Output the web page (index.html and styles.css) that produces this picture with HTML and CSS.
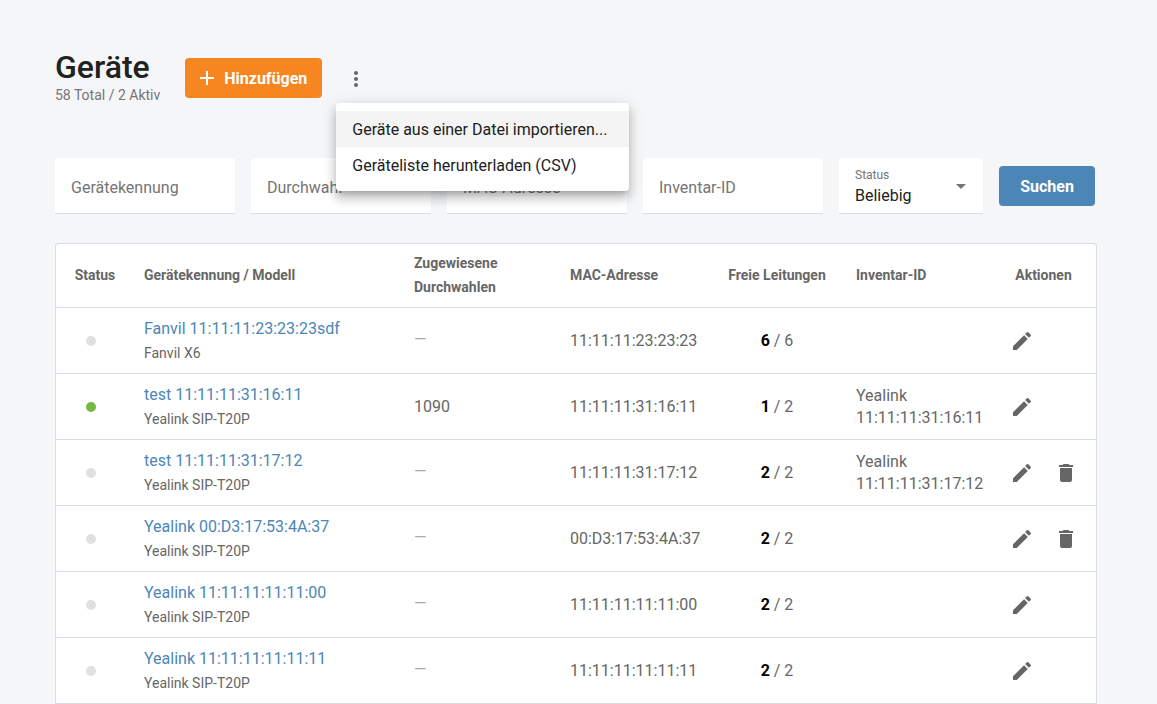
FILE: index.html
```html
<!DOCTYPE html>
<html lang="de">
<head>
<meta charset="utf-8">
<meta name="viewport" content="width=device-width, initial-scale=1">
<title>Geräte</title>
<link rel="stylesheet" href="styles.css">
</head>
<body>
<svg class="sprite" aria-hidden="true">
  <symbol id="icon-edit" viewBox="0 0 24 24"><path d="M3 17.25V21h3.75L17.81 9.94l-3.75-3.75L3 17.25zM20.71 7.04a.996.996 0 0 0 0-1.41l-2.34-2.34a.996.996 0 0 0-1.41 0l-1.83 1.83 3.75 3.75 1.83-1.83z"/></symbol>
  <symbol id="icon-delete" viewBox="0 0 24 24"><path d="M6 19c0 1.1.9 2 2 2h8c1.100 0 2-.9 2-2V7H6v12zM19 4h-3.500l-1-1h-5l-1 1H5v2h14V4z"/></symbol>
</svg>
<main class="page">
  <header class="header">
    <div class="heading">
      <h1 class="title">Geräte</h1>
      <p class="subtitle">58 Total / 2 Aktiv</p>
    </div>
    <button class="button button-add" type="button">
      <svg class="plus" viewBox="0 0 14 14" aria-hidden="true"><path d="M6 0h2v6h6v2H8v6H6V8H0V6h6z"/></svg>
      <span>Hinzufügen</span>
    </button>
    <div class="more">
      <button class="icon-button" type="button" aria-label="Weitere Aktionen" aria-haspopup="menu" aria-expanded="true">
        <svg class="icon" viewBox="0 0 24 24" aria-hidden="true"><path d="M12 8c1.100 0 2-.9 2-2s-.9-2-2-2-2 .9-2 2 .9 2 2 2zm0 2c-1.100 0-2 .9-2 2s.9 2 2 2 2-.9 2-2-.9-2-2-2zm0 6c-1.100 0-2 .9-2 2s.9 2 2 2 2-.9 2-2-.9-2-2-2z"/></svg>
      </button>
      <div class="menu" role="menu">
        <button class="menu-item menu-item-active" type="button" role="menuitem">Geräte aus einer Datei importieren...</button>
        <button class="menu-item" type="button" role="menuitem">Geräteliste herunterladen (CSV)</button>
      </div>
    </div>
  </header>

  <form class="filters">
    <input class="field" type="text" placeholder="Gerätekennung" aria-label="Gerätekennung">
    <input class="field" type="text" placeholder="Durchwahl" aria-label="Durchwahl">
    <input class="field" type="text" placeholder="MAC-Adresse" aria-label="MAC-Adresse">
    <input class="field" type="text" placeholder="Inventar-ID" aria-label="Inventar-ID">
    <div class="select-field">
      <label class="select-label" for="status">Status</label>
      <select class="select" id="status"><option>Beliebig</option></select>
      <svg class="select-arrow" viewBox="0 0 10 5" aria-hidden="true"><path d="M0 0h10L5 5z"/></svg>
    </div>
    <button class="button button-search" type="button">Suchen</button>
  </form>

  <div class="card">
    <table class="devices">
      <colgroup>
        <col class="col-status"><col><col class="col-extension"><col class="col-mac"><col class="col-lines"><col class="col-inventory"><col class="col-actions">
      </colgroup>
      <thead>
        <tr>
          <th class="status-heading">Status</th>
          <th>Gerätekennung / Modell</th>
          <th>Zugewiesene Durchwahlen</th>
          <th>MAC-Adresse</th>
          <th class="lines">Freie Leitungen</th>
          <th>Inventar-ID</th>
          <th class="actions">Aktionen</th>
        </tr>
      </thead>
      <tbody>
        <tr>
          <td class="status"><span class="dot"></span></td>
          <td><a class="device" href="#">Fanvil 11:11:11:23:23:23sdf</a><span class="model">Fanvil X6</span></td>
          <td class="none">—</td>
          <td>11:11:11:23:23:23</td>
          <td class="lines"><b>6</b> / 6</td>
          <td></td>
          <td class="actions"><div class="action-list"><button class="action" type="button" aria-label="Bearbeiten"><svg class="icon"><use href="#icon-edit"/></svg></button></div></td>
        </tr>
        <tr>
          <td class="status"><span class="dot dot-active"></span></td>
          <td><a class="device" href="#">test 11:11:11:31:16:11</a><span class="model">Yealink SIP-T20P</span></td>
          <td>1090</td>
          <td>11:11:11:31:16:11</td>
          <td class="lines"><b>1</b> / 2</td>
          <td>Yealink 11:11:11:31:16:11</td>
          <td class="actions"><div class="action-list"><button class="action" type="button" aria-label="Bearbeiten"><svg class="icon"><use href="#icon-edit"/></svg></button></div></td>
        </tr>
        <tr>
          <td class="status"><span class="dot"></span></td>
          <td><a class="device" href="#">test 11:11:11:31:17:12</a><span class="model">Yealink SIP-T20P</span></td>
          <td class="none">—</td>
          <td>11:11:11:31:17:12</td>
          <td class="lines"><b>2</b> / 2</td>
          <td>Yealink 11:11:11:31:17:12</td>
          <td class="actions"><div class="action-list"><button class="action" type="button" aria-label="Bearbeiten"><svg class="icon"><use href="#icon-edit"/></svg></button><button class="action" type="button" aria-label="Löschen"><svg class="icon"><use href="#icon-delete"/></svg></button></div></td>
        </tr>
        <tr>
          <td class="status"><span class="dot"></span></td>
          <td><a class="device" href="#">Yealink 00:D3:17:53:4A:37</a><span class="model">Yealink SIP-T20P</span></td>
          <td class="none">—</td>
          <td>00:D3:17:53:4A:37</td>
          <td class="lines"><b>2</b> / 2</td>
          <td></td>
          <td class="actions"><div class="action-list"><button class="action" type="button" aria-label="Bearbeiten"><svg class="icon"><use href="#icon-edit"/></svg></button><button class="action" type="button" aria-label="Löschen"><svg class="icon"><use href="#icon-delete"/></svg></button></div></td>
        </tr>
        <tr>
          <td class="status"><span class="dot"></span></td>
          <td><a class="device" href="#">Yealink 11:11:11:11:11:00</a><span class="model">Yealink SIP-T20P</span></td>
          <td class="none">—</td>
          <td>11:11:11:11:11:00</td>
          <td class="lines"><b>2</b> / 2</td>
          <td></td>
          <td class="actions"><div class="action-list"><button class="action" type="button" aria-label="Bearbeiten"><svg class="icon"><use href="#icon-edit"/></svg></button></div></td>
        </tr>
        <tr>
          <td class="status"><span class="dot"></span></td>
          <td><a class="device" href="#">Yealink 11:11:11:11:11:11</a><span class="model">Yealink SIP-T20P</span></td>
          <td class="none">—</td>
          <td>11:11:11:11:11:11</td>
          <td class="lines"><b>2</b> / 2</td>
          <td></td>
          <td class="actions"><div class="action-list"><button class="action" type="button" aria-label="Bearbeiten"><svg class="icon"><use href="#icon-edit"/></svg></button></div></td>
        </tr>
      </tbody>
    </table>
  </div>
</main>
</body>
</html>
```

FILE: styles.css
```css
* {
  box-sizing: border-box;
}

body {
  margin: 0;
  background: #f5f6f8;
  color: #666;
  font-family: Roboto, "Liberation Sans", sans-serif;
  font-size: 16px;
}

button,
input,
select {
  border: 0;
  font: inherit;
}

button {
  cursor: pointer;
}

.sprite {
  display: none;
}

.page {
  padding: 48px 60px 0 55px;
}

.header {
  display: flex;
  align-items: center;
  height: 60px;
}

.heading {
  padding-bottom: 4px;
}

.title {
  margin: 0;
  color: #212121;
  font-size: 32px;
  font-weight: 500;
  line-height: 38px;
}

.subtitle {
  margin: 0;
  color: #757575;
  font-size: 14px;
  line-height: 18px;
}

.button {
  height: 40px;
  border-radius: 4px;
  color: #fff;
  font-weight: 700;
}

.button-add {
  display: flex;
  align-items: center;
  justify-content: center;
  gap: 10px;
  width: 137px;
  margin-left: 25px;
  padding: 0;
  background: #f6861f;
}

.plus {
  width: 14px;
  height: 14px;
  fill: currentColor;
}

.more {
  position: relative;
  margin-left: 14px;
}

.icon-button {
  display: flex;
  align-items: center;
  justify-content: center;
  width: 40px;
  height: 42px;
  padding: 2px 0 0;
  background: none;
}

.icon {
  display: block;
  width: 24px;
  height: 24px;
  fill: #666;
}

.menu {
  position: absolute;
  z-index: 1;
  top: 46px;
  left: 0;
  min-width: 293px;
  padding: 8px 0;
  border-radius: 4px;
  background: #fff;
  box-shadow: 0 5px 5px -3px rgba(0, 0, 0, .2), 0 8px 10px 1px rgba(0, 0, 0, .14), 0 3px 14px 2px rgba(0, 0, 0, .12);
}

.menu-item {
  display: block;
  width: 100%;
  height: 36px;
  padding: 0 16px;
  background: none;
  color: #212121;
  text-align: left;
  white-space: nowrap;
}

.menu-item-active {
  background: #f4f4f4;
}

.filters {
  display: grid;
  grid-template-columns: repeat(4, 15fr) 12fr 8fr;
  align-items: center;
  gap: 16px;
  margin: 50px 2px 29px 0;
}

.field {
  width: 100%;
  min-width: 0;
  height: 56px;
  padding: 4px 16px 0;
  border-bottom: 1px solid #dcdee6;
  border-radius: 4px 4px 0 0;
  background: #fff;
  color: #212121;
}

.field::placeholder {
  color: #757575;
  opacity: 1;
}

.select-field {
  position: relative;
  min-width: 0;
}

.select {
  display: block;
  width: 100%;
  height: 56px;
  padding: 20px 32px 0 16px;
  border-bottom: 1px solid #dcdee6;
  border-radius: 4px 4px 0 0;
  background: #fff;
  color: #212121;
  appearance: none;
}

.select-label {
  position: absolute;
  top: 10px;
  left: 16px;
  color: #757575;
  font-size: 12px;
  line-height: 14px;
}

.select-arrow {
  position: absolute;
  top: 26px;
  right: 17px;
  width: 10px;
  height: 5px;
  fill: #757575;
}

.button-search {
  padding: 0;
  background: #4c86b6;
}

.card {
  overflow: hidden;
  border: 1px solid #dcdee6;
  border-bottom: 0;
  border-radius: 4px 4px 0 0;
  background: #fff;
}

.devices {
  width: 100%;
  border-spacing: 0;
  table-layout: fixed;
}

.col-status {
  width: 70px;
}

.col-extension {
  width: 156px;
}

.col-mac {
  width: 164px;
}

.col-lines {
  width: 122px;
}

.col-inventory {
  width: 153px;
}

.col-actions {
  width: 105px;
}

.devices th,
.devices td {
  border-bottom: 1px solid #dcdee6;
  text-align: left;
  vertical-align: middle;
}

.devices th {
  height: 64px;
  padding: 0 18px 2px;
  font-size: 14px;
  font-weight: 700;
  line-height: 24px;
}

.devices td {
  height: 66px;
  padding: 0 0 0 18px;
  line-height: 22px;
}

.devices .status,
.devices td.lines,
.devices td.actions {
  padding: 0;
  text-align: center;
}

.devices th.status-heading,
.devices th.lines,
.devices th.actions {
  padding: 0 0 2px;
  text-align: center;
}

.devices th.status-heading {
  padding-left: 8px;
}

.dot {
  display: block;
  width: 10px;
  height: 10px;
  margin: 0 auto;
  border-radius: 50%;
  background: #e0e0e0;
}

.dot-active {
  background: #76b843;
}

.device,
.model {
  display: block;
}

.device {
  color: #4c86b6;
  line-height: 24px;
  text-decoration: none;
}

.model {
  font-size: 14px;
  line-height: 24px;
}

.devices .none {
  padding-bottom: 2px;
  color: #aaa;
}

.lines b {
  color: #000;
}

.action-list {
  display: flex;
  padding-left: 9px;
}

.action {
  display: flex;
  align-items: center;
  justify-content: center;
  width: 44px;
  height: 40px;
  padding: 0;
  background: none;
}
```
